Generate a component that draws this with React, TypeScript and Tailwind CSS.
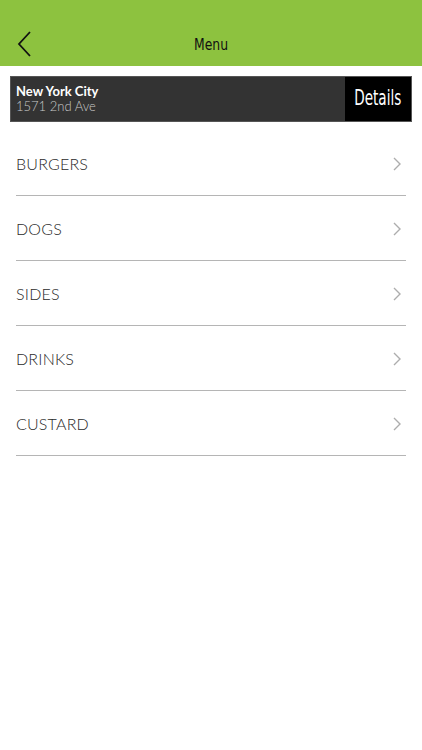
import React from "react";

const items = ["BURGERS", "DOGS", "SIDES", "DRINKS", "CUSTARD"];

export default function App() {
  return (
    <div className="w-[422px] h-[750px] bg-white" style={{ fontFamily: "Lato, 'Noto Sans', sans-serif" }}>
      <div className="h-[66px] bg-[#8dc23f] relative flex items-end">
        <div className="h-[44px] w-full flex items-center relative">
          <svg className="absolute left-[16px] top-[8px]" width="18" height="28" viewBox="0 0 18 28">
            <path d="M14 2 L3 14 L14 26" fill="none" stroke="#111" strokeWidth="1.8" />
          </svg>
          <div className="w-full text-center text-[16px] text-[#111] pt-[2px]" style={{ fontFamily: "'DejaVu Sans Condensed', 'Liberation Sans', sans-serif", transform: "scaleX(0.86)" }}>
            Menu
          </div>
        </div>
      </div>
      <div className="mx-[10px] mt-[10px] h-[46px] flex bg-[#333333] border border-[#555]">
        <div className="flex-1 flex flex-col justify-center pl-[5px] leading-[15px]">
          <div className="text-white text-[13px] font-bold">New York City</div>
          <div className="text-[#c8c8c8] text-[13px] font-light">1571 2nd Ave</div>
        </div>
        <div className="w-[66px] bg-black flex items-center justify-center text-white text-[21px]" style={{ fontFamily: "'DejaVu Sans Condensed', 'Liberation Sans', sans-serif" }}>
          <span className="inline-block whitespace-nowrap" style={{ transform: "scaleX(0.72)" }}>Details</span>
        </div>
      </div>
      <div className="mx-[16px] mt-[9px]">
        {items.map((it) => (
          <div key={it} className="h-[65px] flex items-center justify-between border-b border-[#b5b5b5]">
            <span className="text-[16px] font-light text-[#2a2a2a] tracking-[0.2px] pt-[2px]">{it}</span>
            <svg width="8" height="14" viewBox="0 0 8 14" className="mr-[5px] mt-[2px]">
              <path d="M1 1 L7 7 L1 13" fill="none" stroke="#adadad" strokeWidth="1.4" />
            </svg>
          </div>
        ))}
      </div>
    </div>
  );
}
